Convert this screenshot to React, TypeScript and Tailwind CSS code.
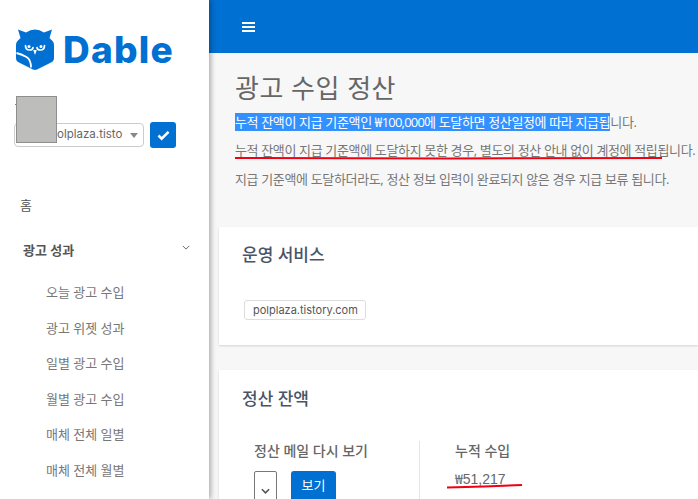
const SUB_MENU = ['오늘 광고 수입', '광고 위젯 성과', '일별 광고 수입', '월별 광고 수입', '매체 전체 일별', '매체 전체 월별'];

const KR = 'font-["Open_Sans","Noto_Sans_CJK_KR",sans-serif]';

function OwlLogo() {
  return (
    <svg viewBox="0 0 38 42" className="w-[38px] h-[42px] shrink-0">
      <path
        d="M2 1.500 L10 4.500 Q19 -1.500 28 4.500 L36 1.500 L33.500 10 L36.500 13 Q38 14.500 38 17 L38 30 Q38 33 35 34.500 L21 41.500 Q19 42.300 17 41.500 L3 34.500 Q0 33 0 30 L0 17 Q0 14.500 1.500 13 L4.500 10 Z"
        fill="#0070d2"
      />
      <path d="M9.500 17.500 Q9.500 22 13.500 22 Q17 22 17 19.500" fill="none" stroke="#fff" strokeWidth="1.700" strokeLinecap="round" />
      <circle cx="13" cy="18.500" r="1.500" fill="#fff" />
      <path d="M28.500 17.500 Q28.500 22 24.500 22 Q21 22 21 19.500" fill="none" stroke="#fff" strokeWidth="1.700" strokeLinecap="round" />
      <circle cx="25" cy="18.500" r="1.500" fill="#fff" />
      <path d="M17.200 22 h3.600 L19 27 z" fill="#fff" />
      <path d="M0.500 25 Q5 26 10.500 29 Q15 31.500 15 39.500" fill="none" stroke="#fff" strokeWidth="1.800" />
    </svg>
  );
}

function Sidebar() {
  return (
    <aside className="relative z-10 w-[209px] shrink-0 bg-white shadow-[2px_0_5px_rgba(0,0,0,0.3)] pt-[28px]">
      <div className="flex items-center gap-[9px] pl-[16px] h-[42px]">
        <OwlLogo />
        <span className='font-["Inter",sans-serif] font-extrabold text-[37px] leading-none tracking-[1.2px] text-[#0070d2]'>Dable</span>
      </div>

      <div className="relative flex items-center gap-[6px] pl-[14px] mt-[52px]">
        <div className='relative w-[130px] h-[24px] border border-[#ccc] rounded-[4px] flex items-center pl-[35px] font-["Inter",sans-serif] text-[11.500px] text-[#666] whitespace-nowrap'>
          polplaza.tisto
          <span className="absolute right-[5px] top-[9px] w-0 h-0 border-x-[4px] border-x-transparent border-t-[5px] border-t-[#888]" />
        </div>
        <button className="w-[26px] h-[26px] rounded-[3px] bg-[#0070d2] flex items-center justify-center">
          <svg viewBox="0 0 14 12" className="w-[13px] h-[11px]">
            <path d="M1.500 6 L5 9.500 L12.500 2" fill="none" stroke="#fff" strokeWidth="2.800" />
          </svg>
        </button>
        {/* censored account box */}
        <span className="absolute left-[15px] top-[-18px] w-[2px] h-[1px] bg-[#a87a40]" />
        <div className="absolute left-[16px] top-[-26px] w-[41px] h-[47px] bg-[#bdbdbc] border border-[#8f8f8f]" />
      </div>

      <nav className={`${KR} mt-[48px]`}>
        <div className="pl-[20px] text-[13px] leading-[18px] text-[#555]">홈</div>
        <div className="flex items-start justify-between pl-[23px] pr-[19px] mt-[27px]">
          <span className="text-[13px] leading-[18px] font-semibold text-[#555]">광고 성과</span>
          <svg viewBox="0 0 10 6" className="w-[8px] h-[5px] mt-[4px]">
            <path d="M1 1 L5 5 L9 1" fill="none" stroke="#666" strokeWidth="1.200" />
          </svg>
        </div>
        <ul className="mt-[24px] pl-[46px] flex flex-col gap-[17.600px]">
          {SUB_MENU.map(item => (
            <li key={item} className="text-[13px] leading-[18px] text-[#777] whitespace-nowrap">{item}</li>
          ))}
        </ul>
      </nav>
    </aside>
  );
}

export default function App() {
  return (
    <div className={`${KR} flex w-[698px] h-[499px] overflow-hidden bg-[#f7f7f7]`}>
      <Sidebar />
      <main className="relative flex-1 min-w-0">
        <header className="h-[53px] bg-[#0070d2] flex items-center pl-[33px]">
          <div className="flex flex-col gap-[2px] w-[13px]">
            <span className="h-[2px] bg-white" />
            <span className="h-[2px] bg-white" />
            <span className="h-[2px] bg-white" />
          </div>
        </header>

        <div className="pl-[26px] whitespace-nowrap">
          <h1 className="text-[26px] leading-[36px] text-[#666] mt-[17px] tracking-[0.5px]">광고 수입 정산</h1>
          <p className="mt-[6px] text-[13px] leading-[19px] text-[#777] tracking-[-0.35px]">
            <span className="bg-[#3390ff] text-white">누적 잔액이 지급 기준액인 <span className='font-["Noto_Sans_CJK_KR"]'>₩</span><span className="tracking-[-0.8px]">100,000</span>에 도달하면 정산일정에 따라 지급됩</span>니다.
          </p>
          <p className="mt-[9px] text-[13px] leading-[19px] text-[#777] tracking-[-0.35px]">누적 잔액이 지급 기준액에 도달하지 못한 경우, 별도의 정산 안내 없이 계정에 적립됩니다.</p>
          <p className="mt-[10px] text-[13px] leading-[19px] text-[#777] tracking-[-0.35px]">지급 기준액에 도달하더라도, 정산 정보 입력이 완료되지 않은 경우 지급 보류 됩니다.</p>
        </div>

        <section className="ml-[10px] mt-[38px] h-[118px] bg-white shadow-[0_1px_2px_rgba(0,0,0,0.15)] pl-[23px] pt-[16px]">
          <h2 className="text-[17px] leading-[24px] font-medium text-[#4a5468]">운영 서비스</h2>
          <span className='inline-block ml-[2px] mt-[33px] h-[20px] w-[122px] pl-[8px] border border-[#ddd] rounded-[3px] font-["Inter",sans-serif] text-[11px] leading-[18px] text-[#555] whitespace-nowrap'>polplaza.tistory.com</span>
        </section>

        <section className="ml-[10px] mt-[25px] h-[200px] bg-white shadow-[0_1px_2px_rgba(0,0,0,0.15)] pl-[23px] pt-[17px]">
          <h2 className="text-[17px] leading-[24px] font-medium text-[#4a5468]">정산 잔액</h2>
          <div className="flex mt-[30px]">
            <div className="w-[177px] pl-[12px]">
              <h3 className="text-[14px] leading-[20px] font-medium text-[#666]">정산 메일 다시 보기</h3>
              <div className="flex items-start gap-[14px] mt-[10px]">
                <div className="w-[23px] h-[40px] border border-[#777] rounded-[2px] flex items-center justify-center">
                  <svg viewBox="0 0 10 6" className="w-[9px] h-[6px]">
                    <path d="M1 1 L5 5 L9 1" fill="none" stroke="#555" strokeWidth="1.800" />
                  </svg>
                </div>
                <button className="w-[45px] h-[30px] rounded-[3px] bg-[#0070d2] text-white text-[13px]">보기</button>
              </div>
            </div>
            <div className="border-l border-[#e5e5e5] pl-[35px] h-[80px]">
              <h3 className="text-[14px] leading-[20px] font-medium text-[#666]">누적 수입</h3>
              <div className='mt-[7px] font-["Liberation_Sans",sans-serif] text-[14px] leading-[20px] text-[#666]'>
                <span className='font-["Noto_Sans_CJK_KR"]'>₩</span>51,217
              </div>
            </div>
          </div>
        </section>

        {/* red marker strokes drawn on top of the screenshot */}
        <svg className="absolute left-0 top-0 w-[489px] h-[499px] pointer-events-none" viewBox="0 0 489 499">
          <path d="M26 158 L240 158.500 L453 158" fill="none" stroke="#f00010" strokeWidth="2" />
          <path d="M238 487.500 L275 486.500 L313 485" fill="none" stroke="#f00010" strokeWidth="2" />
        </svg>
      </main>
    </div>
  );
}
